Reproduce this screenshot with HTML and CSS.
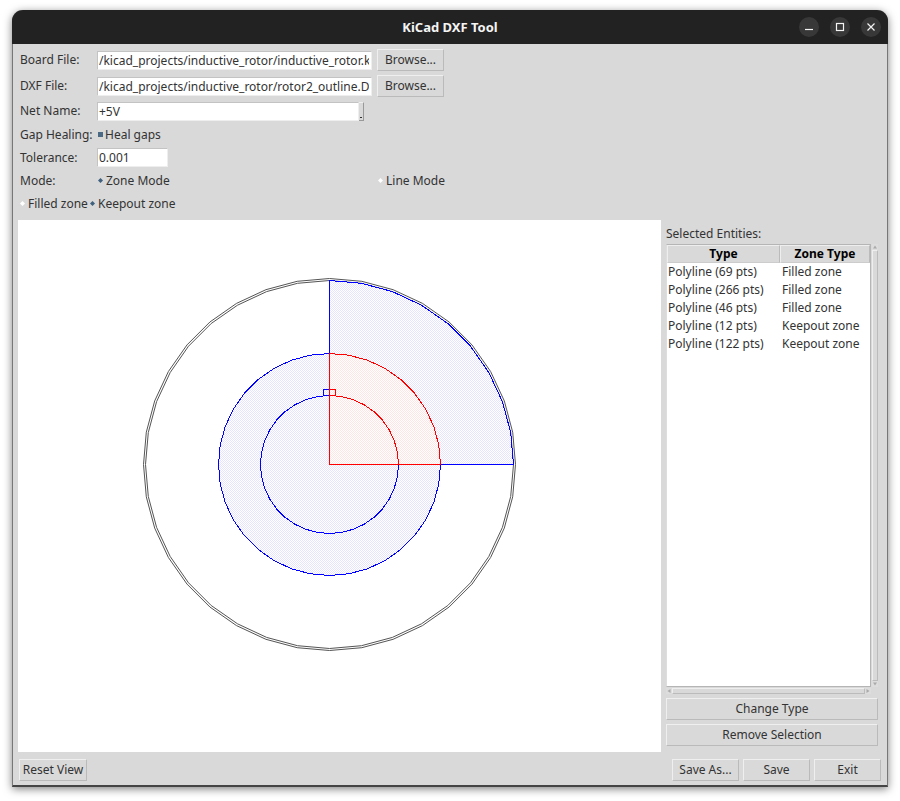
FILE: index.html
```html
<!DOCTYPE html>
<html lang="en">
<head>
<meta charset="utf-8">
<title>KiCad DXF Tool</title>
<link rel="stylesheet" href="styles.css">
</head>
<body>
<div class="window">
  <header class="titlebar">
    <h1 class="title">KiCad DXF Tool</h1>
    <div class="window-buttons">
      <button class="round" type="button" aria-label="Minimize"><svg viewBox="0 0 20 20"><path d="M6 12.5h8"/></svg></button>
      <button class="round" type="button" aria-label="Maximize"><svg viewBox="0 0 20 20"><rect x="6.5" y="6.5" width="7" height="7"/></svg></button>
      <button class="round" type="button" aria-label="Close"><svg viewBox="0 0 20 20"><path d="M6.5 6.5l7 7M13.5 6.5l-7 7"/></svg></button>
    </div>
  </header>

  <form class="settings">
    <div class="row tall">
      <label class="name" for="board">Board File:</label>
      <input class="field file" id="board" type="text" value="/kicad_projects/inductive_rotor/inductive_rotor.kicad_pcb">
      <button class="btn browse" type="button">Browse...</button>
    </div>
    <div class="row tall">
      <label class="name" for="dxf">DXF File:</label>
      <input class="field file" id="dxf" type="text" value="/kicad_projects/inductive_rotor/rotor2_outline.DXF">
      <button class="btn browse" type="button">Browse...</button>
    </div>
    <div class="row medium">
      <label class="name" for="net">Net Name:</label>
      <div class="combo">
        <select class="field net" id="net"><option>+5V</option></select>
        <span class="combo-arrow"></span>
      </div>
    </div>
    <div class="row">
      <label class="name" for="heal">Gap Healing:</label>
      <input class="check" id="heal" type="checkbox" checked>
      <label for="heal">Heal gaps</label>
    </div>
    <div class="row">
      <label class="name" for="tolerance">Tolerance:</label>
      <input class="field tolerance" id="tolerance" type="text" value="0.001">
    </div>
    <div class="row">
      <span class="name">Mode:</span>
      <label class="choice mode"><input class="radio" type="radio" name="mode" checked>Zone Mode</label>
      <label class="choice"><input class="radio" type="radio" name="mode">Line Mode</label>
    </div>
    <div class="row zones">
      <label class="choice filled"><input class="radio" type="radio" name="zone">Filled zone</label>
      <label class="choice"><input class="radio" type="radio" name="zone" checked>Keepout zone</label>
    </div>
  </form>

  <main class="work">
    <div class="view">
      <svg class="drawing" id="drawing" viewBox="0 0 643 532" role="img" aria-label="Board outline">
        <defs>
          <pattern id="dots-blue" width="2" height="2" patternUnits="userSpaceOnUse"><rect class="wash" width="2" height="2"/><path class="dot-blue" d="M0 0h1v1h-1zM1 1h1v1h-1z"/></pattern>
          <pattern id="dots-red" width="2" height="2" patternUnits="userSpaceOnUse"><rect class="wash" width="2" height="2"/><path class="dot-red" d="M0 0h1v1h-1zM1 1h1v1h-1z"/></pattern>
        </defs>
      </svg>
    </div>
    <aside class="side">
      <h2 class="side-title">Selected Entities:</h2>
      <div class="list">
        <div class="list-body">
          <table class="entities">
            <thead><tr><th class="col-type">Type</th><th>Zone Type</th></tr></thead>
            <tbody>
              <tr><td>Polyline (69 pts)</td><td>Filled zone</td></tr>
              <tr><td>Polyline (266 pts)</td><td>Filled zone</td></tr>
              <tr><td>Polyline (46 pts)</td><td>Filled zone</td></tr>
              <tr><td>Polyline (12 pts)</td><td>Keepout zone</td></tr>
              <tr><td>Polyline (122 pts)</td><td>Keepout zone</td></tr>
            </tbody>
          </table>
        </div>
        <div class="bar-v">
          <svg class="arrow" viewBox="0 0 6 6"><path d="M1 4.5L3 1.5L5 4.5z"/></svg>
          <span class="thumb"></span>
          <svg class="arrow" viewBox="0 0 6 6"><path d="M1 1.5L3 4.5L5 1.5z"/></svg>
        </div>
        <div class="bar-h">
          <svg class="arrow" viewBox="0 0 6 6"><path d="M4.5 1L1.5 3L4.5 5z"/></svg>
          <span class="thumb"></span>
          <svg class="arrow" viewBox="0 0 6 6"><path d="M1.5 1L4.5 3L1.5 5z"/></svg>
        </div>
      </div>
      <button class="btn wide" type="button">Change Type</button>
      <button class="btn wide" type="button">Remove Selection</button>
    </aside>
  </main>

  <footer class="actions">
    <button class="btn reset" type="button">Reset View</button>
    <button class="btn action" type="button">Save As...</button>
    <button class="btn action" type="button">Save</button>
    <button class="btn action" type="button">Exit</button>
  </footer>
</div>
<script src="drawing.js"></script>
</body>
</html>
```
FILE: styles.css
```css
* { box-sizing: border-box; }

body {
  margin: 0;
  padding: 10px 12px 14px;
  min-height: 100vh;
  display: flex;
  background: #fff;
  color: #333;
  font: 12px/18px "Noto Sans", sans-serif;
}

button, input, select { font: inherit; color: inherit; margin: 0; }

.window {
  flex: 1;
  min-width: 0;
  display: flex;
  flex-direction: column;
  background: #d9d9d9;
  border: solid #777;
  border-width: 0 1px 2px;
  border-bottom-color: #444;
  border-radius: 11px 11px 0 0;
  box-shadow: 0 2px 8px rgba(0, 0, 0, 0.5);
}

.titlebar {
  display: grid;
  grid-template-columns: 1fr auto 1fr;
  align-items: center;
  height: 34px;
  margin: 0 -1px;
  padding: 0 7px;
  background: #222;
  border-radius: 11px 11px 0 0;
  color: #f4f4f4;
}
.title { grid-column: 2; margin: 0; font-size: 13px; font-weight: 700; }
.window-buttons { display: flex; justify-content: flex-end; gap: 11px; }
.round { width: 20px; height: 20px; padding: 0; border: 0; border-radius: 50%; background: #383838; }
.round svg { display: block; width: 20px; height: 20px; fill: none; stroke: #f4f4f4; stroke-width: 1.2; }

.settings { padding: 3px 7px 0; }
.row { display: flex; align-items: center; height: 23px; }
.row.tall { height: 26px; }
.row.medium { height: 24px; }
.name { width: 77px; flex: none; white-space: nowrap; }

.field {
  height: 19px;
  padding: 0 1px;
  border: 1px solid;
  border-color: #c3c3c3 #eee #eee #c3c3c3;
  border-radius: 0;
  background: #fff;
  outline: 0;
}
.file { width: 275px; padding: 0 2px 0 1px; }
.tolerance { width: 71px; }
.combo { display: flex; width: 267px; }
.net { flex: 1; appearance: none; }
.combo-arrow { width: 5px; border: 1px solid; border-color: #eee #999 #999 #ddd; border-left: 0; background: linear-gradient(#333, #333) 1px 14px / 2px 1px no-repeat; }

.btn {
  height: 22px;
  padding: 0 2px;
  border: 1px solid;
  border-color: #efefef #bababa #bababa #efefef;
  background: #d9d9d9;
  line-height: 18px;
}
.browse { width: 67px; margin-left: 5px; }

.check { appearance: none; width: 5px; height: 5px; margin: 0 2px 0 1px; background: #fff; }
.check:checked { background: #4a6984; }
.choice { display: flex; align-items: center; }
.mode { width: 280px; }
.filled { width: 70px; }
.radio { appearance: none; width: 5px; height: 5px; margin: 0 3px 0 1px; background: #fff; clip-path: polygon(50% 0, 100% 50%, 50% 100%, 0 50%); }
.radio:checked { background: #3f607e; }
.zones .radio { margin-left: 0; }

.work { flex: 1; min-height: 0; display: flex; gap: 5px; padding: 5px 9px 0 5px; }
.view { flex: 1; min-width: 0; background: #fff; }
.drawing { display: block; width: 100%; height: 100%; fill: none; }
.outline { stroke: #555; }
.filled-zone { fill: url(#dots-blue); stroke: #00f; shape-rendering: crispEdges; }
.keepout-zone { fill: url(#dots-red); stroke: #f00; shape-rendering: crispEdges; }
.wash { fill: #fff; }
.dot-blue { fill: #e4e4ff; }
.dot-red { fill: #ffe4e4; }

.side { width: 212px; flex: none; display: flex; flex-direction: column; padding: 4px 0 6px; gap: 4px; }
.side-title { margin: 0 0 -4px; font-size: 12px; font-weight: 400; line-height: 20px; }
.list { flex: 1; display: grid; grid-template: 1fr 6px / 1fr 6px; gap: 1px; }
.list-body { background: #fff; border: 1px solid; border-color: #b5b5b5 #b5b5b5 #b5b5b5 #ddd; }
.entities { width: 100%; border-spacing: 0; table-layout: fixed; }
.entities th { height: 18px; padding: 0; background: #d9d9d9; color: #000; border: 1px solid; border-color: #eee #bbb #ccc #eee; line-height: 16px; }
.entities td { height: 18px; padding: 0 1px; white-space: nowrap; line-height: 18px; }
.entities td + td { padding-left: 2px; }
.col-type { width: 113px; }
.bar-v, .bar-h { display: flex; background: #c3c3c3; }
.bar-v { flex-direction: column; }
.thumb { flex: 1; background: #d9d9d9; border: 1px solid; border-color: #eee #bbb #bbb #eee; }
.arrow { width: 6px; height: 6px; background: #ddd; fill: #aaa; }

.actions { display: flex; align-items: center; gap: 4px; padding: 7px 6px 4px; }
.reset { width: 68px; margin-right: auto; }
.action { width: 67px; }
```
FILE: drawing.js
```js
const svg = document.getElementById("drawing");
const center = { x: 311.5, y: 244.5 };

// Points on an arc, one every ten degrees, clockwise from twelve o'clock.
function arc(radius, from, to) {
  const points = [];
  for (let deg = from; deg <= to; deg += 10) {
    const a = deg * Math.PI / 180;
    points.push([center.x + radius * Math.sin(a), center.y - radius * Math.cos(a)]);
  }
  return points;
}

function polygon(points, className) {
  const el = document.createElementNS("http://www.w3.org/2000/svg", "polygon");
  el.setAttribute("points", points.map(p => p.map(v => v.toFixed(1)).join(",")).join(" "));
  el.setAttribute("class", className);
  svg.append(el);
}

const middle = [center.x, center.y];

polygon(arc(186, 0, 360), "outline");
polygon(arc(184, 0, 360), "outline");
polygon([middle, ...arc(184, 0, 90)], "filled-zone");
polygon(arc(111, 0, 360), "filled-zone");
polygon(arc(69, 0, 360), "filled-zone");
polygon([[305.5, 175.5], [305.5, 169.5], [311.5, 169.5], [311.5, 175.5]], "filled-zone");
polygon([middle, ...arc(111, 0, 90)], "keepout-zone");
polygon([middle, ...arc(69, 0, 90)], "keepout-zone");
polygon([[311.5, 175.5], [311.5, 169.5], [317.5, 169.5], [317.5, 175.5]], "keepout-zone");
```
